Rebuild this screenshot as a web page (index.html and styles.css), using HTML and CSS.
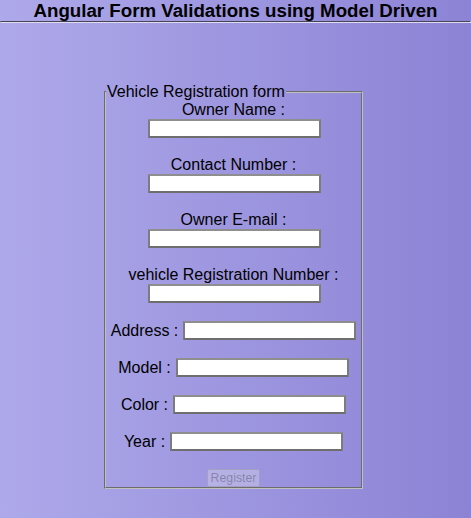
FILE: index.html
```html
<!DOCTYPE html>
<html>
<head>
<meta charset="utf-8">
<link rel="stylesheet" href="styles.css">
</head>
<body>
<h2 class="title">Angular Form Validations using Model Driven</h2>
<hr class="rule">
<form class="form">
  <fieldset class="box">
    <legend class="legend">Vehicle Registration form</legend>
    <div class="fields">
      <div class="stack">
        <label class="lbl">Owner Name :</label>
        <input class="inp" type="text">
      </div>
      <div class="stack">
        <label class="lbl">Contact Number :</label>
        <input class="inp" type="text">
      </div>
      <div class="stack">
        <label class="lbl">Owner E-mail :</label>
        <input class="inp" type="text">
      </div>
      <div class="stack">
        <label class="lbl">vehicle Registration Number :</label>
        <input class="inp" type="text">
      </div>
      <div class="row">
        <label class="lbl">Address :</label>
        <input class="inp" type="text">
      </div>
      <div class="row">
        <label class="lbl">Model :</label>
        <input class="inp" type="text">
      </div>
      <div class="row">
        <label class="lbl">Color :</label>
        <input class="inp" type="text">
      </div>
      <div class="row">
        <label class="lbl">Year :</label>
        <input class="inp" type="text">
      </div>
      <button class="btn" type="submit" disabled>Register</button>
    </div>
  </fieldset>
</form>
</body>
</html>
```
FILE: styles.css
```css
html {
  min-height: 100%;
  background: linear-gradient(to right, #aea9ea, #8c83d5);
}
body {
  margin: 0;
  min-height: 518px;
  font-family: "Liberation Sans", Arial, sans-serif;
  color: #000;
}
.title {
  margin: 0;
  font-size: 18.7px;
  line-height: 21px;
  font-weight: bold;
  text-align: center;
}
.rule {
  margin: 0;
  border: 1px inset #eee;
  border-top-color: #8f8aa8;
  border-bottom-color: #dedbf2;
  height: 0;
}
.form {
  margin: 60px 0 0 104px;
}
.box {
  box-sizing: border-box;
  width: 259px;
  margin: 0;
  padding: 0;
  border: 2px groove #c0c0c0;
}
.legend {
  font-size: 16px;
  line-height: 18px;
  padding: 0 1px;
  margin-left: 0;
}
.fields {
  display: flex;
  flex-direction: column;
  align-items: center;
  font-size: 16px;
  line-height: 18px;
}
.stack {
  display: flex;
  flex-direction: column;
  align-items: center;
  margin-bottom: 18px;
}
.stack .inp {
  margin-left: 2px;
}
.row {
  display: flex;
  align-items: center;
  gap: 5px;
  height: 19px;
  margin-bottom: 18px;
}
.lbl {
  white-space: nowrap;
}
.inp {
  box-sizing: border-box;
  width: 173px;
  height: 19px;
  margin: 0;
  padding: 0 2px;
  border: 2px solid;
  border-color: #8e8e8e #7c7c7c #6e6e6e #7c7c7c;
  border-radius: 1px;
  background: #fff;
}
.btn {
  box-sizing: border-box;
  height: 18px;
  padding: 0 3px;
  margin: 0;
  font-family: "Liberation Sans", Arial, sans-serif;
  font-size: 12.3px;
  line-height: 16px;
  background: rgba(239, 239, 239, 0.3);
  color: rgba(16, 16, 16, 0.3);
  border: 1px solid rgba(118, 118, 118, 0.3);
  border-radius: 2px;
}
```
